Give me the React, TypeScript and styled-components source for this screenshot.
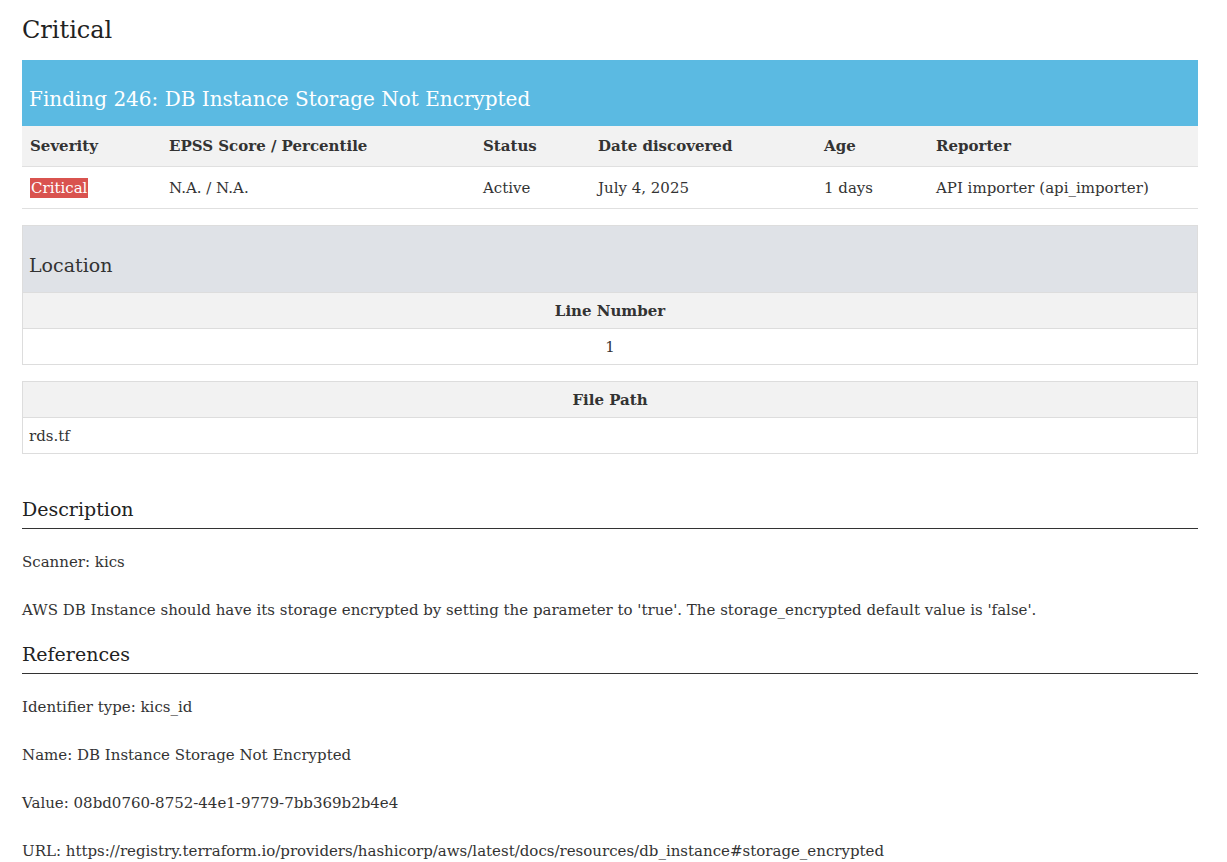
import React from "react"
import styled, { createGlobalStyle } from "styled-components"

const Global = createGlobalStyle`
  body {
    margin: 0;
    background: #fff;
    color: #333;
    font-family: "DejaVu Serif", "Liberation Serif", serif;
    font-size: 15px;
  }
`

const Page = styled.div`
  padding: 16px 29px 0 22px;
`

const Title = styled.h3`
  font-size: 24px;
  font-weight: normal;
  margin: 0 0 16px;
  color: #222;
`

const Banner = styled.div`
  background: #5bbae2;
  color: #fff;
  height: 66px;
  display: flex;
  align-items: flex-end;
  padding: 0 7px 15px;
  box-sizing: border-box;
  font-size: 20px;
`

const Table = styled.table`
  width: 100%;
  border-collapse: collapse;
  table-layout: fixed;
  th {
    background: #f2f2f2;
    text-align: left;
    font-weight: bold;
    height: 40px;
    padding: 0 8px;
    border-bottom: 1px solid #e0e0e0;
  }
  td {
    height: 41px;
    padding: 0 8px;
    border-bottom: 1px solid #e0e0e0;
    white-space: nowrap;
  }
`

const Badge = styled.span`
  background: #d9534f;
  color: #fff;
  padding: 1px 1px;
`

const Panel = styled.div`
  border: 1px solid #ddd;
  margin-top: 16px;
`

const PanelHead = styled.div`
  background: #dfe2e7;
  height: 66px;
  display: flex;
  align-items: flex-end;
  padding: 0 6px 16px;
  box-sizing: border-box;
  font-size: 19px;
  color: #333;
`

const Grid = styled.table<{ gap?: number; center?: boolean; bordered?: boolean }>`
  width: 100%;
  border-collapse: collapse;
  border: ${(p) => (p.bordered ? "1px solid #ddd" : "none")};
  border-top: ${(p) => (p.bordered ? "1px solid #ddd" : "1px solid #ddd")};
  margin-bottom: ${(p) => p.gap ?? 0}px;
  th {
    background: #f2f2f2;
    border-bottom: 1px solid #ddd;
    height: 33px;
    font-weight: bold;
  }
  td {
    height: 35px;
    padding: 0 6px;
    text-align: ${(p) => (p.center ? "center" : "left")};
  }
`

const Section = styled.h4`
  font-size: 19px;
  font-weight: normal;
  margin: 0;
  padding-bottom: 8px;
  border-bottom: 1px solid #333;
  color: #222;
`

const Para = styled.p`
  margin: 18px 0 0;
  line-height: 30px;
`

const cols = ["Severity", "EPSS Score / Percentile", "Status", "Date discovered", "Age", "Reporter"]
const widths = [123, 298, 99, 210, 96, undefined]

export default function App() {
  return (
    <Page>
      <Global />
      <Title>Critical</Title>
      <Banner>Finding 246: DB Instance Storage Not Encrypted</Banner>
      <Table>
        <thead>
          <tr>
            {cols.map((c, i) => (
              <th key={c} style={{ width: widths[i] }}>{c}</th>
            ))}
          </tr>
        </thead>
        <tbody>
          <tr>
            <td><Badge>Critical</Badge></td>
            <td>N.A. / N.A.</td>
            <td>Active</td>
            <td>July 4, 2025</td>
            <td>1 days</td>
            <td>API importer (api_importer)</td>
          </tr>
        </tbody>
      </Table>
      <Panel>
        <PanelHead>Location</PanelHead>
        <Grid center>
          <thead><tr><th>Line Number</th></tr></thead>
          <tbody><tr><td>1</td></tr></tbody>
        </Grid>
      </Panel>
      <div style={{ height: 16 }} />
      <Grid bordered gap={44}>
        <thead><tr><th>File Path</th></tr></thead>
        <tbody><tr><td>rds.tf</td></tr></tbody>
      </Grid>
      <Section>Description</Section>
      <Para>Scanner: kics</Para>
      <Para>AWS DB Instance should have its storage encrypted by setting the parameter to 'true'. The storage_encrypted default value is 'false'.</Para>
      <div style={{ height: 18 }} />
      <Section>References</Section>
      <Para>Identifier type: kics_id</Para>
      <Para>Name: DB Instance Storage Not Encrypted</Para>
      <Para>Value: 08bd0760-8752-44e1-9779-7bb369b2b4e4</Para>
      <Para>URL: https://registry.terraform.io/providers/hashicorp/aws/latest/docs/resources/db_instance#storage_encrypted</Para>
    </Page>
  )
}
